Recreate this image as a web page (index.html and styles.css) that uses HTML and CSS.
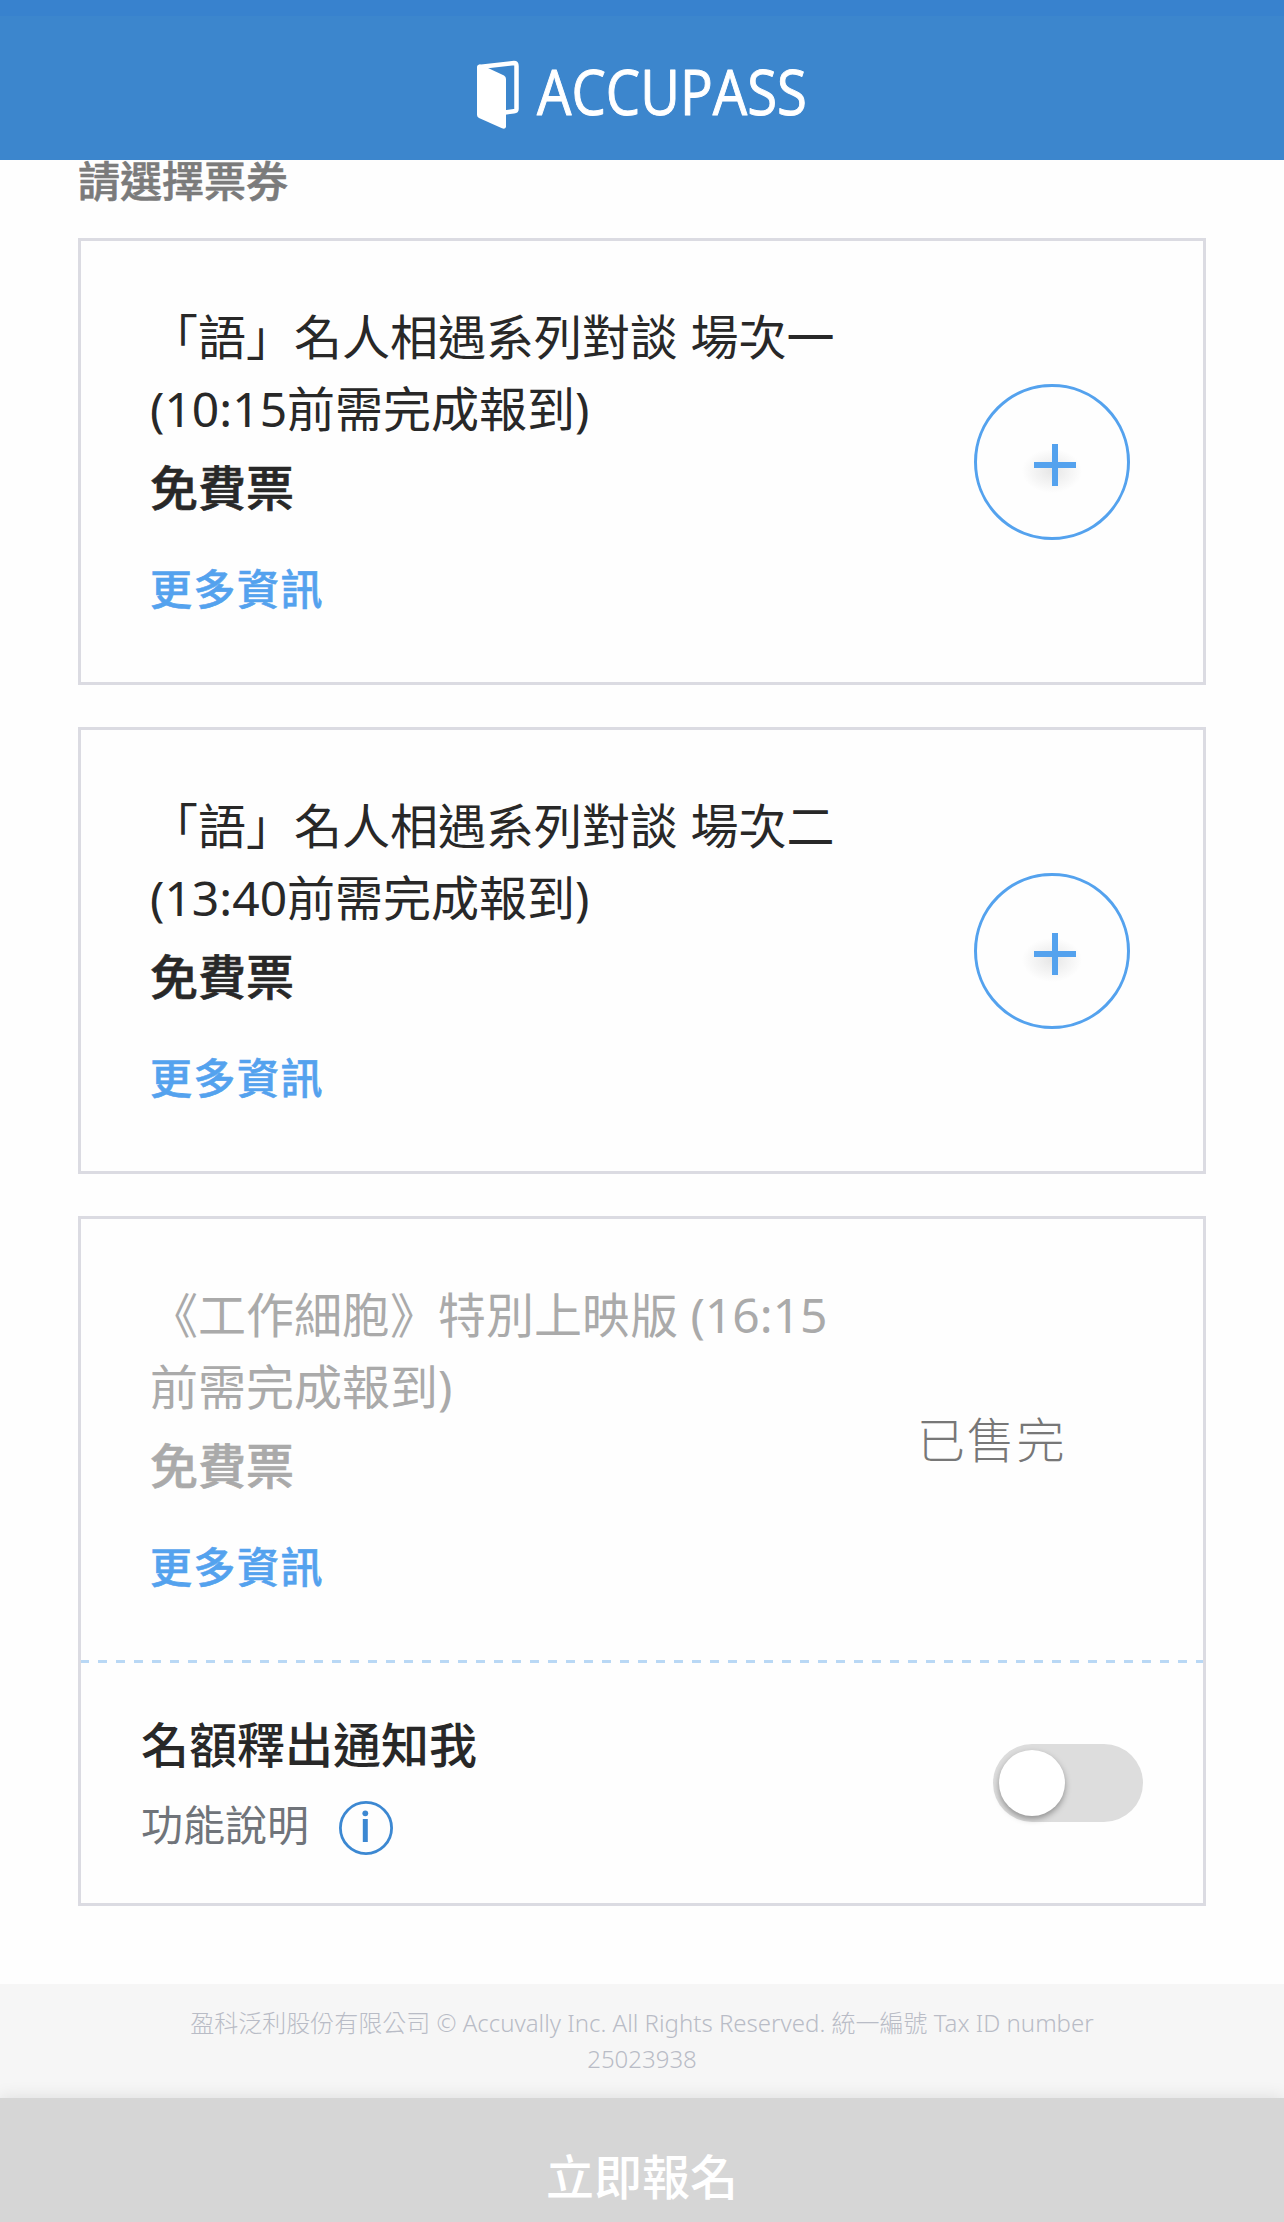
FILE: index.html
```html
<!DOCTYPE html>
<html lang="zh-Hant">
<head>
<meta charset="utf-8">
<meta name="viewport" content="width=device-width, initial-scale=1">
<title>ACCUPASS</title>
<link rel="stylesheet" href="styles.css">
</head>
<body>
<header class="header">
  <svg class="logo" viewBox="0 -16 340 100" width="340" height="100" role="img" aria-label="ACCUPASS">
    <path d="M2 7 L37 3 Q39.500 3 39.500 6 L39.500 49 Q39.500 51 37 51.300 L28 52.500" fill="none" stroke="#fff" stroke-width="4.500" stroke-linejoin="round"/>
    <path d="M0 7 Q0 4.500 3 4.500 L11 8 L27 15.500 Q29 16.500 29 19 L29 67 Q28 69.500 25 68.200 L2 58 Q0 57 0 55 Z" fill="#fff"/>
    <text class="logo-text" x="60" y="54.500" textLength="270" lengthAdjust="spacingAndGlyphs">ACCUPASS</text>
  </svg>
</header>
<main class="main">
  <h1 class="title">請選擇票券</h1>
  <div class="tickets">
    <article class="card">
      <div class="ticket">
        <div class="info">
          <p class="name">「語」名人相遇系列對談 場次一 (10:15前需完成報到)</p>
          <p class="price">免費票</p>
          <a class="more">更多資訊</a>
        </div>
        <button class="add" aria-label="+">
          <svg width="42" height="42" viewBox="0 0 42 42"><path d="M0 21H42M21 0V42" stroke="#54a2ee" stroke-width="6"/></svg>
        </button>
      </div>
    </article>
    <article class="card">
      <div class="ticket">
        <div class="info">
          <p class="name">「語」名人相遇系列對談 場次二 (13:40前需完成報到)</p>
          <p class="price">免費票</p>
          <a class="more">更多資訊</a>
        </div>
        <button class="add" aria-label="+">
          <svg width="42" height="42" viewBox="0 0 42 42"><path d="M0 21H42M21 0V42" stroke="#54a2ee" stroke-width="6"/></svg>
        </button>
      </div>
    </article>
    <article class="card">
      <div class="ticket ticket-off">
        <div class="info">
          <p class="name">《工作細胞》特別上映版 (16:15前需完成報到)</p>
          <p class="price">免費票</p>
          <a class="more">更多資訊</a>
        </div>
        <span class="soldout">已售完</span>
      </div>
      <svg class="divider" width="1122" height="3"><path d="M-1 1.500H1122" stroke="#b9d8f5" stroke-width="3" stroke-dasharray="9 9"/></svg>
      <div class="notify">
        <div>
          <p class="notify-title">名額釋出通知我</p>
          <p class="help"><span class="help-text">功能說明</span>
            <svg width="54" height="54" viewBox="0 0 54 54"><circle cx="27" cy="27" r="25.600" fill="none" stroke="#3c88d2" stroke-width="2.800"/><circle cx="26.300" cy="12.300" r="2.900" fill="#3c88d2"/><path d="M26.300 18V41" stroke="#3c88d2" stroke-width="5"/></svg>
          </p>
        </div>
        <span class="toggle"><span class="knob"></span></span>
      </div>
    </article>
  </div>
</main>
<footer class="footer">盈科泛利股份有限公司 © Accuvally Inc. All Rights Reserved. 統一編號 Tax ID number 25023938</footer>
<button class="submit">立即報名</button>
</body>
</html>
```
FILE: styles.css
```css
* { box-sizing: border-box; }
body {
  margin: 0;
  height: 2222px;
  overflow: hidden;
  display: flex;
  flex-direction: column;
  background: #fefefe;
  color: #282828;
  font-family: "Noto Sans", "Noto Sans CJK TC", sans-serif;
}
h1, p { margin: 0; }
button { font: inherit; padding: 0; border: 0; }
.header {
  height: 160px;
  flex: none;
  display: flex;
  justify-content: center;
  padding: 28px 0 0 10px;
  background: #3c86cd;
  border-top: 16px solid #3882ce;
}
.logo { display: block; }
.logo-text {
  font: 400 63px "Open Sans", sans-serif;
  fill: #fff;
  stroke: #fff;
  stroke-width: 1px;
  stroke-linejoin: round;
}
.main { height: 1824px; flex: none; padding: 0 78px; }
.title {
  height: 78px;
  line-height: 42px;
  font-size: 42px;
  font-weight: 500;
  color: #7b7b7b;
}
.title, .price, .more { -webkit-text-stroke: .6px currentColor; }
.tickets { display: flex; flex-direction: column; gap: 42px; }
.card { border: 3px solid #dbdbe2; }
.ticket {
  height: 441px;
  display: flex;
  justify-content: space-between;
  align-items: center;
  padding: 0 73px 0 69px;
}
.info { width: 705px; height: 322px; }
.name { font-size: 48px; line-height: 72px; }
.price { margin-top: 7px; font-size: 48px; line-height: 72px; font-weight: 500; }
.more {
  display: block;
  margin-top: 33px;
  font-size: 42px;
  line-height: 64px;
  font-weight: 500;
  letter-spacing: 1.5px;
  color: #54a2ee;
}
.add {
  width: 156px;
  height: 156px;
  display: flex;
  align-items: center;
  justify-content: center;
  padding: 6px 0 0 6px;
  border: 3px solid #54a2ee;
  border-radius: 50%;
  background: radial-gradient(ellipse 30px 22px at 75px 84px, #e6e6e6, transparent);
}
.ticket-off .name, .ticket-off .price { color: #aaa; }
.soldout {
  width: 217px;
  padding-bottom: 6px;
  font-size: 48px;
  font-weight: 300;
  letter-spacing: 1.8px;
  color: #777;
}
.ticket-off { padding-right: 69px; }
.divider { display: block; }
.notify {
  height: 240px;
  display: flex;
  justify-content: space-between;
  padding: 46px 60px 0 60px;
}
.notify-title { font-size: 48px; line-height: 72px; font-weight: 500; }
.help {
  display: flex;
  align-items: center;
  gap: 30px;
  height: 54px;
  margin-top: 20px;
  font-size: 42px;
  color: #70747a;
}
.help-text { padding-bottom: 11px; }
.toggle {
  width: 150px;
  height: 78px;
  margin-top: 35px;
  padding: 6px;
  border-radius: 39px;
  background: #ddd;
}
.knob {
  display: block;
  width: 66px;
  height: 66px;
  border-radius: 50%;
  background: #fff;
  box-shadow: 0 3px 6px rgba(0, 0, 0, .35);
}
.footer {
  height: 114px;
  flex: none;
  padding: 21px 180px 0;
  background: #f6f6f6;
  color: #b9bcc6;
  font-size: 24px;
  line-height: 36px;
  font-weight: 300;
  text-align: center;
}
.submit {
  height: 160px;
  flex: none;
  padding-bottom: 8px;
  background: #d6d6d6;
  box-shadow: 0 -1px 16px rgba(0, 0, 0, .1);
  color: #fff;
  font-size: 48px;
  font-weight: 500;
}
```
